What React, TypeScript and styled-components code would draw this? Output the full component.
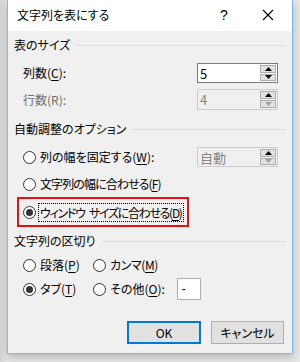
import React from "react";
import styled, { createGlobalStyle } from "styled-components";

const Global = createGlobalStyle`
  html, body { margin: 0; padding: 0; background: #ececec; }
  body {
    width: 300px; height: 362px; overflow: hidden;
    font-family: "Noto Sans CJK JP", "Noto Sans", sans-serif;
    font-size: 12px; color: #000;
    font-feature-settings: "palt";
  }
`;

const Desk = styled.div`
  width: 300px;
  height: 362px;
  padding-left: 7px;
  box-sizing: border-box;
  background: linear-gradient(90deg, #d2d2d2 0px, #e6e6e6 7px);
`;

const Win = styled.div`
  width: 286px;
  height: 354px;
  box-sizing: border-box;
  border: 1px solid #7eb8ec;
  border-top: none;
  background: #f0f0f0;
  display: flex;
  flex-direction: column;
  box-shadow: 0 3px 8px rgba(0, 0, 0, 0.22);
`;

const TitleBar = styled.div`
  height: 31px;
  flex: none;
  background: #fff;
  display: flex;
  align-items: center;
  padding-left: 9px;
`;

const Title = styled.div`
  flex: 1;
  font-size: 12px;
  line-height: 16px;
  margin-top: -1px;
`;

const Help = styled.div`
  width: 20px;
  text-align: center;
  font-family: "Liberation Sans", sans-serif;
  font-size: 14px;
  margin-right: 28px;
  margin-top: -2px;
`;

const Close = styled.div`
  width: 12px;
  height: 12px;
  margin-right: 18px;
  margin-top: -2px;
  display: flex;
`;

const Body = styled.div`
  flex: 1;
  display: flex;
  flex-direction: column;
  padding: 6px 6px 0 6px;
`;

const GroupHead = styled.div<{ $mt: number }>`
  display: flex;
  align-items: center;
  height: 16px;
  margin-top: ${(p) => p.$mt}px;
  gap: 6px;
  &::after {
    content: "";
    flex: 1;
    height: 1px;
    background: #dcdcdc;
  }
`;

const HeadText = styled.span`
  line-height: 16px;
`;

const Row = styled.div<{ $mt: number; $h?: number }>`
  display: flex;
  align-items: center;
  height: ${(p) => p.$h ?? 20}px;
  margin-top: ${(p) => p.$mt}px;
  padding-left: 9px;
`;

const Label = styled.span<{ $disabled?: boolean; $ls?: number }>`
  color: ${(p) => (p.$disabled ? "#6d6d6d" : "#000")};
  line-height: 16px;
  white-space: nowrap;
  letter-spacing: ${(p) => p.$ls ?? 0}px;
`;

const U = styled.span`
  text-decoration: underline;
  text-underline-offset: 2px;
`;

const Spacer = styled.div`
  flex: 1;
`;

const SpinBox = styled.div<{ $disabled?: boolean; $h?: number }>`
  width: 81px;
  height: ${(p) => p.$h ?? 20}px;
  box-sizing: border-box;
  border: 1px solid ${(p) => (p.$disabled ? "#cccccc" : "#7a7a7a")};
  background: ${(p) => (p.$disabled ? "#f0f0f0" : "#fff")};
  display: flex;
  margin-right: 8px;
`;

const SpinValue = styled.div<{ $disabled?: boolean }>`
  flex: 1;
  padding-left: 2px;
  display: flex;
  align-items: center;
  font-family: "Noto Sans CJK JP", "Noto Sans", sans-serif;
  font-size: 13px;
  color: ${(p) => (p.$disabled ? "#838383" : "#000")};
`;

const SpinBtns = styled.div`
  width: 16px;
  display: flex;
  flex-direction: column;
  gap: 1px;
  padding: 1px;
`;

const SpinBtn = styled.div`
  flex: 1;
  background: #e1e1e1;
  border: 1px solid #adadad;
  display: flex;
  align-items: center;
  justify-content: center;
`;

const Arrow = ({ up, color }: { up?: boolean; color: string }) => (
  <svg width="7" height="4" viewBox="0 0 7 4">
    <polygon points={up ? "3.5,0 7,4 0,4" : "0,0 7,0 3.5,4"} fill={color} />
  </svg>
);

const RadioCircle = styled.span<{ $checked?: boolean }>`
  width: 13px;
  height: 13px;
  box-sizing: border-box;
  border-radius: 50%;
  border: 1px solid #333;
  background: #fff;
  flex: none;
  display: flex;
  align-items: center;
  justify-content: center;
  margin-right: 4px;
  &::after {
    content: "";
    width: 7px;
    height: 7px;
    border-radius: 50%;
    background: ${(p) => (p.$checked ? "#333" : "transparent")};
  }
`;

const RadioItem = styled.div<{ $w?: number }>`
  display: flex;
  align-items: center;
  width: ${(p) => (p.$w ? `${p.$w}px` : "auto")};
  flex: none;
`;

const Highlight = styled.div`
  margin-top: 3px;
  margin-left: 3px;
  width: 172px;
  height: 30px;
  box-sizing: border-box;
  border: 2px solid #e81010;
  display: flex;
  align-items: center;
  padding-left: 4px;
`;

const Focus = styled.span`
  outline: 1px dotted #000;
  outline-offset: 0px;
  padding: 1px 1px;
  line-height: 15px;
  margin-left: -1px;
  letter-spacing: -1.3px;
  word-spacing: 3px;
  white-space: nowrap;
`;

const SmallInput = styled.div`
  width: 24px;
  height: 22px;
  box-sizing: border-box;
  border: 1px solid #abadb3;
  background: #fff;
  margin-left: 12px;
  display: flex;
  align-items: center;
  padding-left: 4px;
  font-family: "Liberation Sans", sans-serif;
  font-size: 12px;
`;

const Buttons = styled.div`
  display: flex;
  justify-content: flex-end;
  gap: 10px;
  margin-top: 21px;
  padding-right: 2px;
`;

const Btn = styled.button<{ $primary?: boolean; $w: number }>`
  width: ${(p) => p.$w}px;
  height: 23px;
  box-sizing: border-box;
  background: #e1e1e1;
  border: ${(p) => (p.$primary ? "2px solid #0078d7" : "1px solid #adadad")};
  font-family: "Noto Sans CJK JP", "Noto Sans", sans-serif;
  font-feature-settings: "palt";
  font-size: 12px;
  color: #000;
  padding: 0;
  display: flex;
  align-items: center;
  justify-content: center;
`;

export default function App() {
  return (
    <>
      <Global />
      <Desk>
        <Win>
          <TitleBar>
            <Title>文字列を表にする</Title>
            <Help>?</Help>
            <Close>
              <svg width="12" height="12" viewBox="0 0 12 12">
                <path d="M1 1 L11 11 M11 1 L1 11" stroke="#000" strokeWidth="1.1" />
              </svg>
            </Close>
          </TitleBar>
          <Body>
            <GroupHead $mt={0}>
              <HeadText>表のサイズ</HeadText>
            </GroupHead>
            <Row $mt={10}>
              <Label>
                列数(<U>C</U>):
              </Label>
              <Spacer />
              <SpinBox>
                <SpinValue>5</SpinValue>
                <SpinBtns>
                  <SpinBtn>
                    <Arrow up color="#000" />
                  </SpinBtn>
                  <SpinBtn>
                    <Arrow color="#000" />
                  </SpinBtn>
                </SpinBtns>
              </SpinBox>
            </Row>
            <Row $mt={6} $h={21}>
              <Label $disabled>行数(R):</Label>
              <Spacer />
              <SpinBox $disabled $h={21}>
                <SpinValue $disabled>4</SpinValue>
                <SpinBtns>
                  <SpinBtn>
                    <Arrow up color="#000" />
                  </SpinBtn>
                  <SpinBtn>
                    <Arrow color="#a0a0a0" />
                  </SpinBtn>
                </SpinBtns>
              </SpinBox>
            </Row>
            <GroupHead $mt={11}>
              <HeadText>自動調整のオプション</HeadText>
            </GroupHead>
            <Row $mt={10}>
              <RadioItem>
                <RadioCircle />
                <Label>
                  列の幅を固定する(<U>W</U>):
                </Label>
              </RadioItem>
              <Spacer />
              <SpinBox $disabled>
                <SpinValue $disabled>自動</SpinValue>
                <SpinBtns>
                  <SpinBtn>
                    <Arrow up color="#000" />
                  </SpinBtn>
                  <SpinBtn>
                    <Arrow color="#a0a0a0" />
                  </SpinBtn>
                </SpinBtns>
              </SpinBox>
            </Row>
            <Row $mt={7}>
              <RadioItem>
                <RadioCircle />
                <Label $ls={-0.9}>
                  文字列の幅に合わせる(<U>F</U>)
                </Label>
              </RadioItem>
            </Row>
            <Highlight>
              <RadioItem>
                <RadioCircle $checked />
                <Focus>
                  ウィンドウ サイズに合わせる(<U>D</U>)
                </Focus>
              </RadioItem>
            </Highlight>
            <GroupHead $mt={6}>
              <HeadText>文字列の区切り</HeadText>
            </GroupHead>
            <Row $mt={6}>
              <RadioItem $w={70}>
                <RadioCircle />
                <Label>
                  段落(<U>P</U>)
                </Label>
              </RadioItem>
              <RadioItem>
                <RadioCircle />
                <Label $ls={-0.4}>
                  カンマ(<U>M</U>)
                </Label>
              </RadioItem>
            </Row>
            <Row $mt={3} $h={22}>
              <RadioItem $w={70}>
                <RadioCircle $checked />
                <Label>
                  タブ(<U>T</U>)
                </Label>
              </RadioItem>
              <RadioItem>
                <RadioCircle />
                <Label>
                  その他(<U>O</U>):
                </Label>
              </RadioItem>
              <SmallInput>-</SmallInput>
            </Row>
            <Buttons>
              <Btn $primary $w={74}>
                OK
              </Btn>
              <Btn $w={73}>キャンセル</Btn>
            </Buttons>
          </Body>
        </Win>
      </Desk>
    </>
  );
}
